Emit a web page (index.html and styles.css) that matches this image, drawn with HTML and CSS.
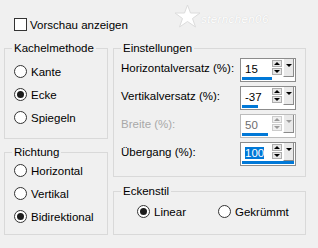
FILE: index.html
```html
<!DOCTYPE html>
<html>
  <head>
    <meta charset="UTF-8">
    <title>Kacheln</title>
    <link rel="stylesheet" href="styles.css">
  </head>
  <body>
    <div class="page">
      <div class="watermark">
        <svg width="27" height="24" viewBox="0 0 27 24">
          <polygon points="13.5,1 16.5,9 26,9 18.5,14.5 21.5,23 13.5,17.5 5.5,23 8.5,14.5 1,9 10.5,9" fill="#ffffff" stroke="#dcdcdc" stroke-width="1"/>
        </svg>
        <span>sternchen06</span>
      </div>

      <label class="preview">
        <span class="check"></span>
        Vorschau anzeigen
      </label>

      <div class="main">
        <div class="col">
          <fieldset class="group group-tile">
            <legend>Kachelmethode</legend>
            <div class="group-body">
              <div class="option"><span class="radio"></span>Kante</div>
              <div class="option"><span class="radio on"></span>Ecke</div>
              <div class="option"><span class="radio"></span>Spiegeln</div>
            </div>
          </fieldset>

          <fieldset class="group group-dir">
            <legend>Richtung</legend>
            <div class="group-body">
              <div class="option"><span class="radio"></span>Horizontal</div>
              <div class="option"><span class="radio"></span>Vertikal</div>
              <div class="option"><span class="radio on"></span>Bidirektional</div>
            </div>
          </fieldset>
        </div>

        <div class="col">
          <fieldset class="group group-settings">
            <legend>Einstellungen</legend>
            <div class="group-body">
              <div class="field-row">
                <span class="field-label">Horizontalversatz (%):</span>
                <div class="spin">
                  <div class="spin-top">
                    <span class="spin-value">15</span>
                    <span class="spin-arrows"><span class="arrow-btn up"></span><span class="arrow-btn down"></span></span>
                    <span class="spin-drop"></span>
                  </div>
                  <div class="spin-bar"><span class="spin-fill" style="width: 30px"></span></div>
                </div>
              </div>

              <div class="field-row">
                <span class="field-label">Vertikalversatz (%):</span>
                <div class="spin">
                  <div class="spin-top">
                    <span class="spin-value">-37</span>
                    <span class="spin-arrows"><span class="arrow-btn up"></span><span class="arrow-btn down"></span></span>
                    <span class="spin-drop"></span>
                  </div>
                  <div class="spin-bar"><span class="spin-fill" style="width: 16px"></span></div>
                </div>
              </div>

              <div class="field-row disabled">
                <span class="field-label">Breite (%):</span>
                <div class="spin">
                  <div class="spin-top">
                    <span class="spin-value">50</span>
                    <span class="spin-arrows"><span class="arrow-btn up"></span><span class="arrow-btn down"></span></span>
                    <span class="spin-drop"></span>
                  </div>
                  <div class="spin-bar"><span class="spin-fill" style="width: 26px"></span></div>
                </div>
              </div>

              <div class="field-row last">
                <span class="field-label">Übergang (%):</span>
                <div class="spin">
                  <div class="spin-top">
                    <span class="spin-value"><span class="selected">100</span></span>
                    <span class="spin-arrows"><span class="arrow-btn up"></span><span class="arrow-btn down"></span></span>
                    <span class="spin-drop"></span>
                  </div>
                  <div class="spin-bar"><span class="spin-fill" style="width: 52px"></span></div>
                </div>
              </div>
            </div>
          </fieldset>

          <fieldset class="group group-corner">
            <legend>Eckenstil</legend>
            <div class="group-body corner-options">
              <div class="option wide"><span class="radio on"></span>Linear</div>
              <div class="option"><span class="radio"></span>Gekrümmt</div>
            </div>
          </fieldset>
        </div>
      </div>
    </div>
  </body>
</html>
```

FILE: styles.css
```css
:root {
  --bg-color: #f0f0f0;
  --text-color: #000000;
  --group-border: #d9d9d9;
  --control-border: #333333;
  --field-border: #8c8c8c;
  --accent: #0078d7;
  --disabled: #a8a8a8;
}

* {
  box-sizing: border-box;
}

body {
  margin: 0;
  background: var(--bg-color);
  color: var(--text-color);
  font-family: "Liberation Sans", Arial, sans-serif;
  font-size: 11.5px;
  line-height: 14px;
}

.page {
  position: relative;
  width: 318px;
  height: 248px;
  padding: 18px 0 0 4px;
}

.watermark {
  position: absolute;
  top: 4px;
  left: 174px;
  display: flex;
  align-items: center;
  gap: 0;
  color: #ffffff;
  font-style: italic;
  font-size: 11.5px;
  letter-spacing: 0.4px;
  text-shadow: 0 0 1px #c8c8c8;
}

.watermark span {
  margin-top: 5px;
}

.preview {
  display: flex;
  align-items: center;
  gap: 3px;
  height: 13px;
  margin: 0 0 10px 10px;
}

.check {
  width: 13px;
  height: 13px;
  border: 1px solid var(--control-border);
  background: #ffffff;
}

.main {
  display: grid;
  grid-template-columns: 104px 193px;
  column-gap: 5px;
}

.col {
  display: flex;
  flex-direction: column;
}

.group {
  margin: 0;
  padding: 0;
  border: 1px solid var(--group-border);
  min-width: 0;
}

.group legend {
  margin-left: 7px;
  padding: 0 2px;
  line-height: 14px;
}

/* Radio options */

.option {
  display: flex;
  align-items: center;
  gap: 4px;
  height: 23px;
}

.radio {
  display: flex;
  align-items: center;
  justify-content: center;
  width: 13px;
  height: 13px;
  border: 1px solid var(--control-border);
  border-radius: 50%;
  background: #ffffff;
}

.radio.on::after {
  content: "";
  width: 7px;
  height: 7px;
  border-radius: 50%;
  background: #1c1c1c;
}

.group-tile {
  height: 98px;
}

.group-tile .group-body {
  padding: 5px 0 0 9px;
}

.group-dir {
  height: 90px;
  margin-top: 6px;
}

.group-dir .group-body {
  padding: 0 0 0 9px;
}

/* Settings */

.group-settings {
  height: 136px;
}

.group-settings .group-body {
  padding: 3px 9px 0 7px;
}

.field-row {
  display: flex;
  align-items: center;
  justify-content: space-between;
  height: 24px;
  margin-bottom: 4px;
}

.field-row.last {
  margin-top: 2px;
  margin-bottom: 0;
}

.field-label {
  padding-bottom: 4px;
}

.disabled .field-label {
  color: var(--disabled);
}

.spin {
  width: 56px;
  height: 24px;
  border: 1px solid var(--field-border);
  background: #ffffff;
  display: flex;
  flex-direction: column;
}

.spin-top {
  display: flex;
  height: 18px;
}

.spin-value {
  flex: 1;
  padding: 3px 0 0 4px;
  line-height: 14px;
}

.selected {
  background: var(--accent);
  color: #ffffff;
}

.spin-arrows {
  display: flex;
  flex-direction: column;
  gap: 1px;
  width: 10px;
  margin: 1px 1px 0 0;
}

.arrow-btn {
  display: flex;
  align-items: center;
  justify-content: center;
  height: 7px;
  border: 1px solid #adadad;
  background: #e6e6e6;
}

.arrow-btn::before {
  content: "";
  border-left: 3px solid transparent;
  border-right: 3px solid transparent;
}

.arrow-btn.up::before {
  border-bottom: 3px solid #000000;
}

.arrow-btn.down::before {
  border-top: 3px solid #000000;
}

.spin-drop {
  display: flex;
  justify-content: center;
  padding-top: 5px;
  width: 11px;
  margin-right: 1px;
  border-left: 1px solid #ffffff;
  border-right: 1px solid #8a8a8a;
  border-bottom: 1px solid #8a8a8a;
  background: #e9e9e9;
}

.spin-drop::before {
  content: "";
  height: 0;
  border-left: 3px solid transparent;
  border-right: 3px solid transparent;
  border-top: 3px solid #000000;
}

.spin-bar {
  height: 3px;
  margin: 0 0 1px 1px;
}

.spin-fill {
  display: block;
  height: 3px;
  background: var(--accent);
}

.disabled .spin {
  border-color: #bcbcbc;
}

.disabled .spin-value {
  color: #6d6d6d;
}

.disabled .arrow-btn {
  border-color: #cccccc;
  background: #efefef;
}

.disabled .arrow-btn.up::before {
  border-bottom-color: #9a9a9a;
}

.disabled .arrow-btn.down::before,
.disabled .spin-drop::before {
  border-top-color: #9a9a9a;
}

/* Corner style */

.group-corner {
  height: 51px;
  margin-top: 7px;
}

.group-corner .group-body {
  padding: 2px 0 0 23px;
}

.corner-options {
  display: flex;
}

.corner-options .wide {
  width: 81px;
}
```
